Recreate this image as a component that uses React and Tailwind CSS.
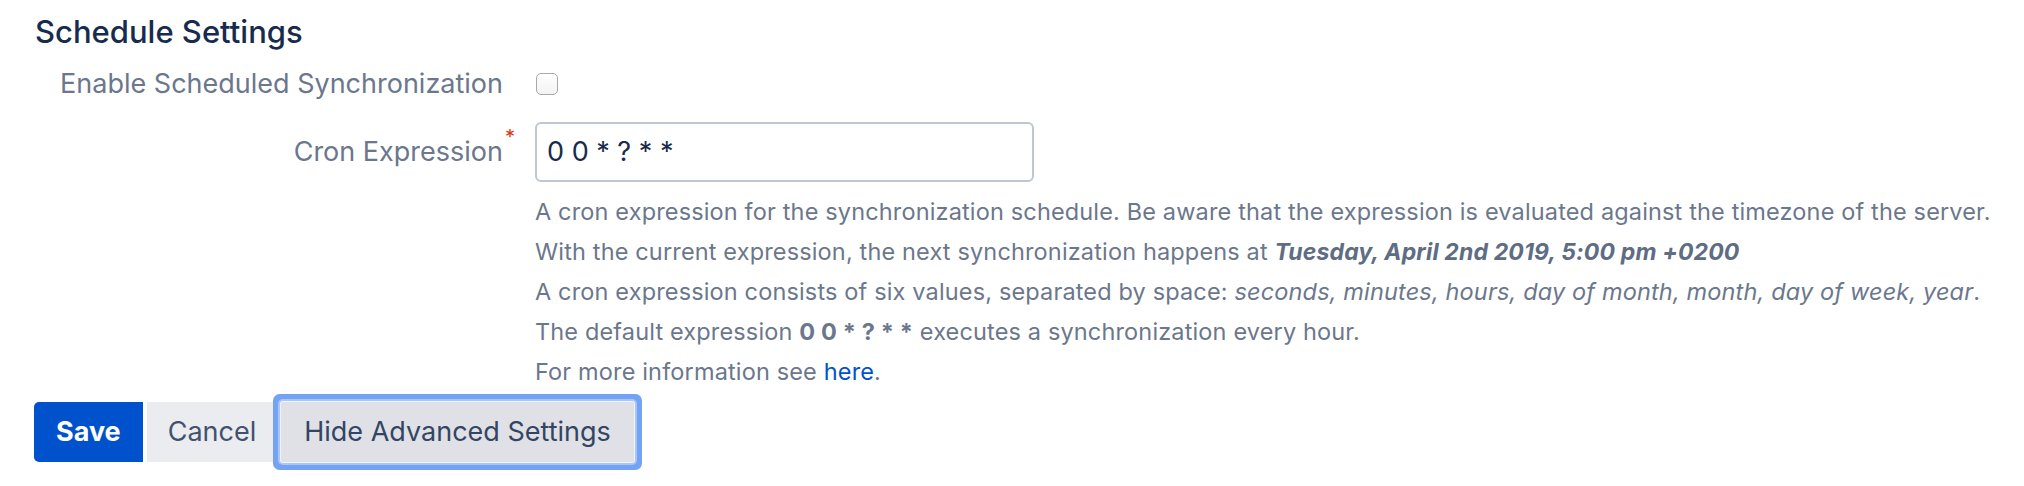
export default function App() {
  return (
    <div className="min-h-[486px] w-[2024px] bg-white pl-[35px] pt-[14px] font-[Inter,'Noto_Sans',sans-serif]">
      <h2 className="h-[36px] text-[31px] font-medium leading-[36px] text-[#172B4D]">Schedule Settings</h2>

      <div className="mt-[14px] flex h-[40px] items-center">
        <div className="w-[468px] text-right text-[27px] leading-[40px] text-[#6B778C]">Enable Scheduled Synchronization</div>
        <div className="ml-[33px] h-[22px] w-[22px] rounded-[5px] border border-[#a9a9a9] bg-gradient-to-b from-white to-[#f3f3f3]" />
      </div>

      <div className="mt-[18px] flex h-[60px] items-center">
        <div className="relative w-[468px] text-right text-[27px] leading-[40px] text-[#6B778C]">
          Cron Expression
          <span className="absolute left-full top-[-10px] ml-[2px] text-[20px] leading-[30px] text-[#DE350B]">*</span>
        </div>
        <div className="ml-[32px] flex h-[60px] w-[499px] items-center rounded-[6px] border-2 border-[#C1C7D0] bg-white pl-[10px] text-[27px] text-[#172B4D]">
          0 0 * ? * *
        </div>
      </div>

      <div className="ml-[500px] mt-[10px] text-[23.5px] leading-[40px] tracking-[0.15px] text-[#6B778C]">
        <div>A cron expression for the synchronization schedule. Be aware that the expression is evaluated against the timezone of the server.</div>
        <div>
          With the current expression, the next synchronization happens at{" "}
          <span className="text-[23px] font-bold italic text-[#5E6C84]">Tuesday, April 2nd 2019, 5:00 pm +0200</span>
        </div>
        <div>
          A cron expression consists of six values, separated by space:{" "}
          <span className="italic">seconds, minutes, hours, day of month, month, day of week, year</span>.
        </div>
        <div>
          The default expression <span className="font-bold">0 0 * ? * *</span> executes a synchronization every hour.
        </div>
        <div>
          For more information see <span className="text-[#0052CC]">here</span>.
        </div>
      </div>

      <div className="ml-[-1px] mt-[10px] flex gap-[4px]">
        <button className="h-[60px] rounded-l-[5px] bg-[#0052CC] px-[22px] text-[27px] font-bold text-white">Save</button>
        <button className="h-[60px] bg-[#EBECF0] px-[21px] text-[27px] text-[#42526E]">Cancel</button>
        <button className="h-[60px] rounded-[2px] bg-[#DFE1E6] px-[23px] text-[27px] text-[#344563] shadow-[0_0_0_1px_#eef3fd,0_0_0_3px_#a9c6f8,0_0_0_8px_#74a3f3]">
          Hide Advanced Settings
        </button>
      </div>
    </div>
  );
}
